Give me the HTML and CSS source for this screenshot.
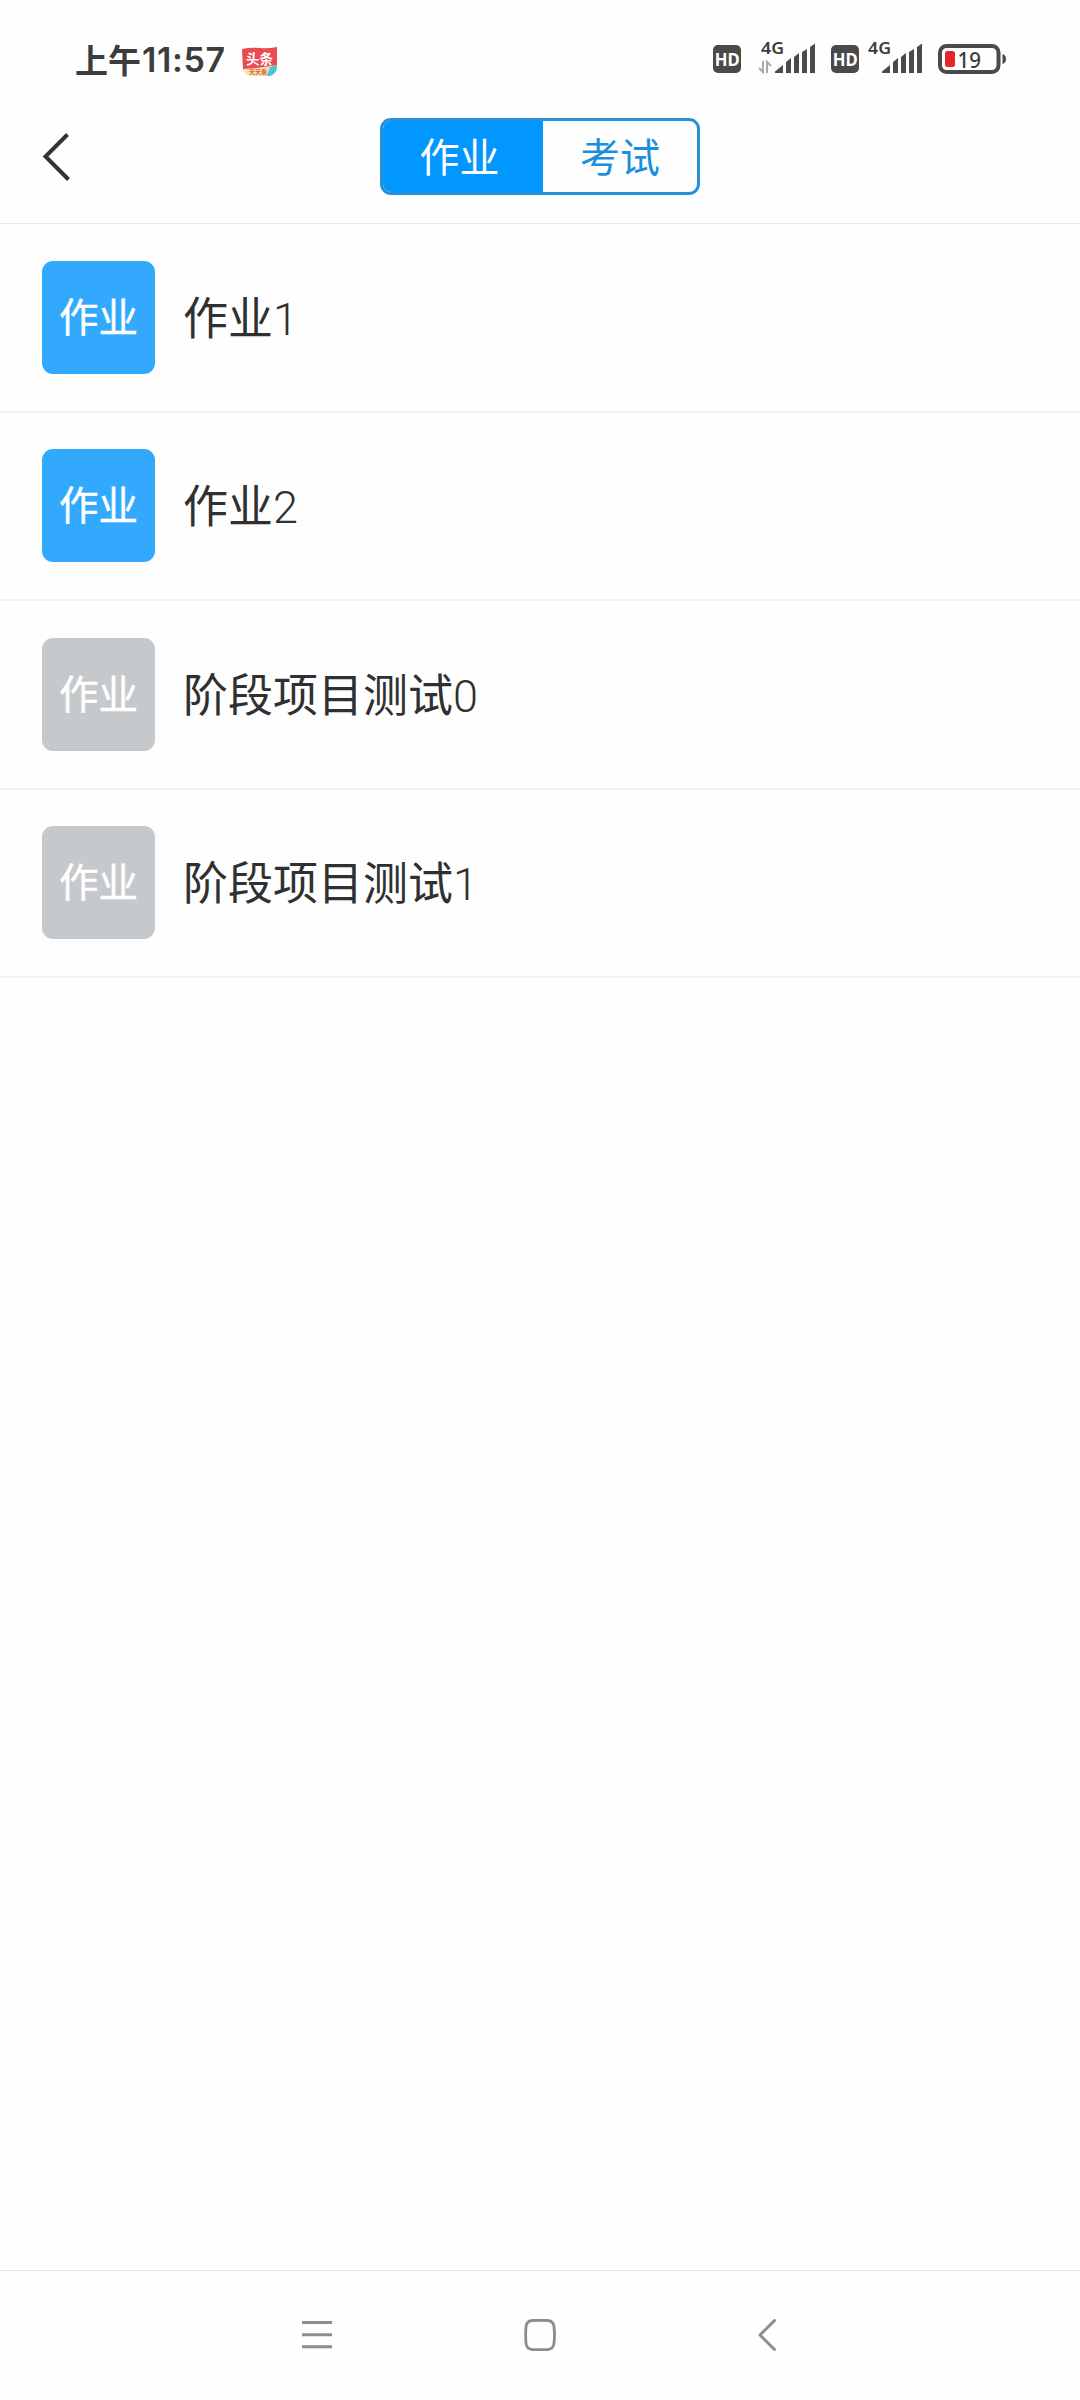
FILE: index.html
```html
<!DOCTYPE html>
<html lang="zh-CN">
<head>
<meta charset="utf-8">
<title>作业</title>
<link rel="stylesheet" href="styles.css">
</head>
<body>
<div class="screen">
  <div class="status-bar">
    <div class="clock"><span class="clock-cjk">上午</span><span class="clock-num">11:57</span></div>
    <svg class="news" width="36" height="30" viewBox="0 0 36 30">
      <path d="M0 2Q10 0 18 1T35 0V21Q34 27 28 29H10Q2 28 1 22Z" fill="#f7dfad"/>
      <path d="M0 2Q10 0 18 1T35 0V18Q18 21 1 22Z" fill="#e94b50"/>
      <path d="M25 29L28 20L35 18V21Q34 27 28 29Z" fill="#4fc3d6"/>
      <text x="4" y="16.500" textLength="27" lengthAdjust="spacingAndGlyphs" class="news-title">头条</text>
      <text x="16" y="27.300" text-anchor="middle" class="news-sub">天天看</text>
    </svg>
    <div class="indicators">
      <svg width="293" height="50" viewBox="713 31 293 50">
        <g id="hd">
          <rect x="713" y="45" width="28" height="28" rx="5" fill="#4a4a4a"/>
          <text x="714.800" y="65.700" textLength="25" lengthAdjust="spacingAndGlyphs" class="hd">HD</text>
        </g>
        <text x="761" y="54" textLength="23" lengthAdjust="spacingAndGlyphs" class="net">4G</text>
        <g id="signal" fill="#4a4a4a">
          <path d="M775 73V71.500L783 65V73Z"/>
          <path d="M786 73V62L791 58V73Z"/>
          <path d="M794 73V57L799 53V73Z"/>
          <path d="M802 73V52L807 49V73Z"/>
          <path d="M810 73V47L815 43.500V73Z"/>
        </g>
        <path d="M763 61V72L759 68M767 73V62L771 66" fill="none" stroke="#aaa" stroke-width="2"/>
        <use href="#hd" x="118"/>
        <text x="868" y="54" textLength="23" lengthAdjust="spacingAndGlyphs" class="net">4G</text>
        <use href="#signal" x="107"/>
        <rect x="940" y="46" width="58.500" height="26" rx="6.500" fill="none" stroke="#4a4a4a" stroke-width="4"/>
        <path d="M1002.500 54Q1006 55 1006 59T1002.500 64Z" fill="#4a4a4a"/>
        <rect x="945" y="51" width="10" height="16" rx="2.500" fill="#e6252b"/>
        <text x="957.500" y="67.500" textLength="23.500" lengthAdjust="spacingAndGlyphs" class="level">19</text>
      </svg>
    </div>
  </div>

  <div class="header">
    <svg class="back" width="30" height="50" viewBox="0 0 30 50"><path d="M26.500 2.500L4.500 24.500L27.500 47.500" fill="none" stroke="#333" stroke-width="4"/></svg>
    <div class="tabs">
      <div class="tab active">作业</div>
      <div class="tab">考试</div>
    </div>
  </div>

  <div class="list">
    <div class="row tall"><div class="tile">作业</div><div class="title">作业<span class="digit">1</span></div></div>
    <div class="row"><div class="tile">作业</div><div class="title">作业<span class="digit">2</span></div></div>
    <div class="row tall"><div class="tile done">作业</div><div class="title">阶段项目测试<span class="digit">0</span></div></div>
    <div class="row"><div class="tile done">作业</div><div class="title">阶段项目测试<span class="digit">1</span></div></div>
  </div>

  <div class="nav">
    <svg width="30" height="32" viewBox="0 0 30 32"><path d="M0 3.500H30M0 15.700H30M0 27.700H30" stroke="#8d8d8d" stroke-width="3"/></svg>
    <svg width="32" height="32" viewBox="0 0 32 32"><path d="M8 1.500Q16 1 24 1.500Q29.500 2 30 8Q31 16 30 24Q29.500 30 24 30.500Q16 31 8 30.500Q2.500 30 2 24Q1.300 16 2 8Q2.500 2 8 1.500Z" fill="none" stroke="#8d8d8d" stroke-width="2.800"/></svg>
    <svg width="20" height="32" viewBox="0 0 20 32"><path d="M16.500 1.500L2 16L16.500 30.500" fill="none" stroke="#8d8d8d" stroke-width="3" stroke-linecap="round" stroke-linejoin="round"/></svg>
  </div>
</div>
</body>
</html>
```
FILE: styles.css
```css
* { box-sizing: border-box; }
body {
  margin: 0;
  background: #fefefe;
  color: #303030;
  font-family: Roboto, "Noto Sans CJK SC", sans-serif;
}
svg { display: block; flex: none; }
.screen {
  width: 1080px;
  height: 2400px;
  display: flex;
  flex-direction: column;
}
.status-bar {
  height: 100px;
  padding: 31px 74px 0 75px;
  display: flex;
  align-items: flex-start;
}
.clock {
  width: 167px;
  margin-top: 8px;
  height: 40px;
  display: flex;
  color: #3c3c3c;
  white-space: nowrap;
}
.clock-cjk { font: 700 33px/40px "Noto Sans CJK SC", sans-serif; }
.clock-num {
  font: 600 34px/41px Inter, sans-serif;
  letter-spacing: 0.6px;
  margin-left: 1px;
}
.news { margin-top: 16px; }
.news-title { font: 700 14px "Noto Sans CJK SC", sans-serif; fill: #fff; }
.news-sub { font: 700 6px "Noto Sans CJK SC", sans-serif; fill: #d9694a; }
.indicators { margin-left: auto; }
.hd {
  font: 700 18px "Noto Sans", sans-serif;
  fill: #fff;
}
.net { font: 600 16px "Noto Sans", sans-serif; fill: #3c3c3c; }
.level { font: 500 22px "Noto Sans", sans-serif; fill: #3c3c3c; }

.header {
  height: 124px;
  border-bottom: 1px solid #e9e9e9;
  display: grid;
  grid-template-columns: 380px 320px 380px;
  align-items: start;
}
.back { margin: 32px 0 0 41px; }
.tabs {
  margin-top: 18px;
  height: 77px;
  border: 3px solid #2491d9;
  border-radius: 11px;
  display: flex;
  overflow: hidden;
  background: #fefefe;
}
.tab {
  flex: 1;
  font: 400 40px/69px "Noto Sans CJK SC", sans-serif;
  text-align: center;
  color: #1c8fdc;
}
.tab.active {
  flex: 0 0 163px;
  margin: -3px 0 -3px -3px;
  padding-top: 3px;
  padding-right: 4px;
  background: #0297fe;
  color: #fff;
}

.row {
  height: 188px;
  padding: 36px 0 0 42px;
  border-bottom: 2px solid #f2f2f2;
  display: flex;
  align-items: flex-start;
  gap: 28px;
}
.row.tall {
  height: 189px;
  padding-top: 37px;
}
.tile {
  width: 113px;
  height: 113px;
  border-radius: 11px;
  background: #33a9fe;
  color: #fff;
  font: 400 39.500px/108px "Noto Sans CJK SC", sans-serif;
  -webkit-text-stroke: 0.4px #fff;
  text-align: center;
}
.tile.done { background: #c6c9cb; }
.title {
  margin-top: 22px;
  font: 400 45px/66px "Noto Sans CJK SC", sans-serif;
  white-space: nowrap;
}
.digit { font-family: Roboto, sans-serif; font-weight: 300; }

.nav {
  margin-top: auto;
  height: 130px;
  border-top: 1px solid #e2e2e2;
  padding: 48px 0 0 302px;
  display: grid;
  grid-template-columns: 222px 234px 20px;
}
```
